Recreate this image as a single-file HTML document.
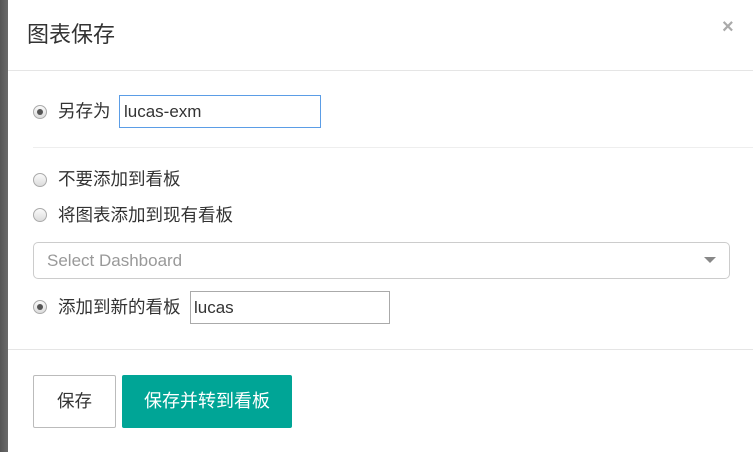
<!DOCTYPE html>
<html><head><meta charset="utf-8"><style>
*{margin:0;padding:0;box-sizing:border-box}
body{width:753px;height:452px;overflow:hidden;background:#fff;font-family:"Liberation Sans","Noto Sans CJK SC",sans-serif;position:relative;color:#333}
.strip{position:absolute;left:0;top:0;width:8px;height:452px;background:linear-gradient(90deg,#555,#6a6a6a)}
.ab{position:absolute}
.t{font-size:17.5px;line-height:22px}
.radio{position:absolute;width:14px;height:14px;border-radius:50%;border:1px solid #aaa;background:linear-gradient(#fafafa,#dcdcdc)}
.radio.on::after{content:"";position:absolute;left:3px;top:3px;width:6px;height:6px;border-radius:50%;background:#555}
.hr{position:absolute;height:1px;background:#e5e5e5}
</style></head><body>
<div class="strip"></div>
<div class="ab" style="left:27px;top:21px;font-size:22px;line-height:28px;color:#333">图表保存</div>
<div class="ab" style="left:722px;top:16px;font-size:20px;font-weight:bold;color:#aaa">×</div>
<div class="hr" style="left:8px;right:0;top:70px"></div>

<div class="radio on" style="left:33px;top:105px"></div>
<div class="ab t" style="left:58px;top:100px">另存为</div>
<div class="ab" style="left:119px;top:95px;width:202px;height:33px;border:1px solid #5b9de6;padding:5px 4px;font-size:17px;line-height:22px">lucas-exm</div>
<div class="hr" style="left:33px;right:0;top:147px;background:#eee"></div>

<div class="radio" style="left:33px;top:173px"></div>
<div class="ab t" style="left:58px;top:168px">不要添加到看板</div>
<div class="radio" style="left:33px;top:208px"></div>
<div class="ab t" style="left:58px;top:204px">将图表添加到现有看板</div>

<div class="ab" style="left:33px;top:242px;width:697px;height:37px;border:1px solid #ccc;border-radius:5px;padding:7px 13px;color:#999;font-size:17px;line-height:22px">Select Dashboard</div>
<div class="ab" style="left:704px;top:257px;width:0;height:0;border-left:6px solid transparent;border-right:6px solid transparent;border-top:6px solid #888"></div>

<div class="radio on" style="left:33px;top:300px"></div>
<div class="ab t" style="left:58px;top:296px">添加到新的看板</div>
<div class="ab" style="left:190px;top:291px;width:200px;height:33px;border:1px solid #aaa;padding:5px 3px;font-size:17px;line-height:22px">lucas</div>

<div class="hr" style="left:8px;right:0;top:349px"></div>
<div class="ab t" style="left:33px;top:375px;width:83px;height:53px;border:1px solid #bbb;border-radius:2px;text-align:center;line-height:51px">保存</div>
<div class="ab" style="left:122px;top:375px;width:170px;height:53px;background:#00a596;border-radius:2px;color:#fff;text-align:center;line-height:53px;font-size:18px">保存并转到看板</div>
</body></html>
